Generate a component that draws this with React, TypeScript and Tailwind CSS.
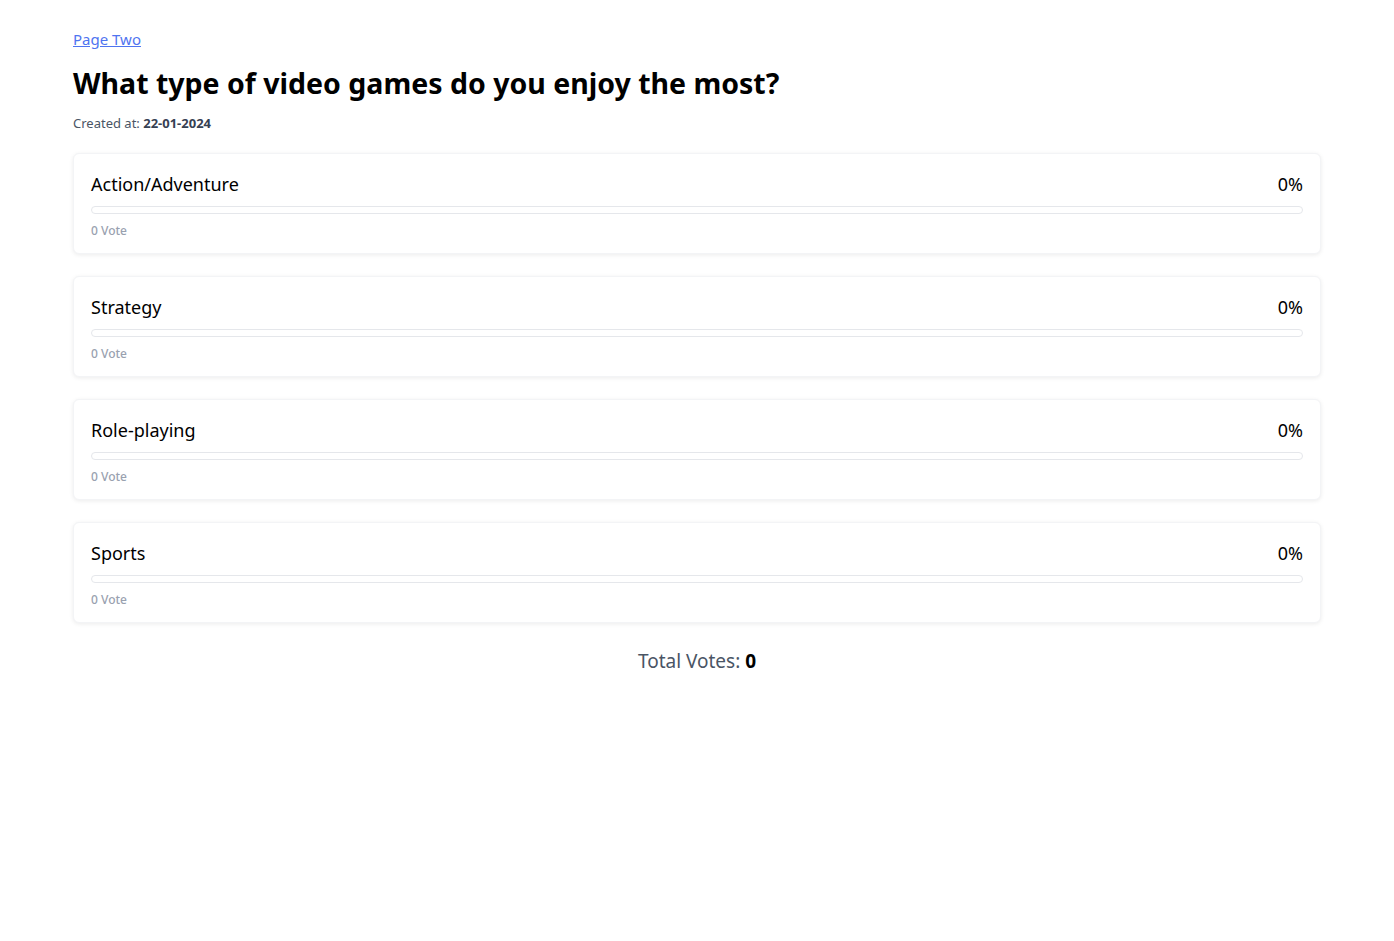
import React from "react";

type Option = {
  label: string;
  votes: number;
};

const options: Option[] = [
  { label: "Action/Adventure", votes: 0 },
  { label: "Strategy", votes: 0 },
  { label: "Role-playing", votes: 0 },
  { label: "Sports", votes: 0 },
];

export default function App() {
  const total = options.reduce((s, o) => s + o.votes, 0);

  return (
    <div className="min-h-screen bg-white" style={{ fontFamily: '"Noto Sans", "Open Sans", sans-serif' }}>
      <div className="mx-auto w-[1248px] pt-[27px]">
        <a href="#" className="text-[15px] text-[#4f74f0] underline">Page Two</a>
        <h1 className="mt-[14px] text-[28.5px] font-bold leading-[36px] text-black">
          What type of video games do you enjoy the most?
        </h1>
        <div className="mt-[13px] text-[13px] text-gray-600">
          Created at: <span className="font-bold text-gray-700">22-01-2024</span>
        </div>

        <div className="mt-[19px] flex flex-col gap-[22px]">
          {options.map(o => {
            const pct = total ? Math.round((o.votes / total) * 100) : 0;
            return (
              <div key={o.label} className="rounded-md border border-gray-100 bg-white px-[17px] pt-[17px] pb-[13px] shadow-[0_1px_4px_rgba(0,0,0,0.08)]">
                <div className="flex items-center justify-between text-[18px] leading-[26px] text-black">
                  <span>{o.label}</span>
                  <span>{pct}%</span>
                </div>
                <div className="mt-[9px] h-[8px] rounded-full border border-gray-200 bg-white">
                  <div className="h-full rounded-full bg-blue-500" style={{ width: `${pct}%` }} />
                </div>
                <div className="mt-[8px] text-[12px] font-medium text-gray-400">{o.votes} Vote</div>
              </div>
            );
          })}
        </div>

        <div className="mt-[24px] text-center text-[19px] text-gray-600">
          Total Votes: <span className="font-bold text-black">{total}</span>
        </div>
      </div>
    </div>
  );
}
